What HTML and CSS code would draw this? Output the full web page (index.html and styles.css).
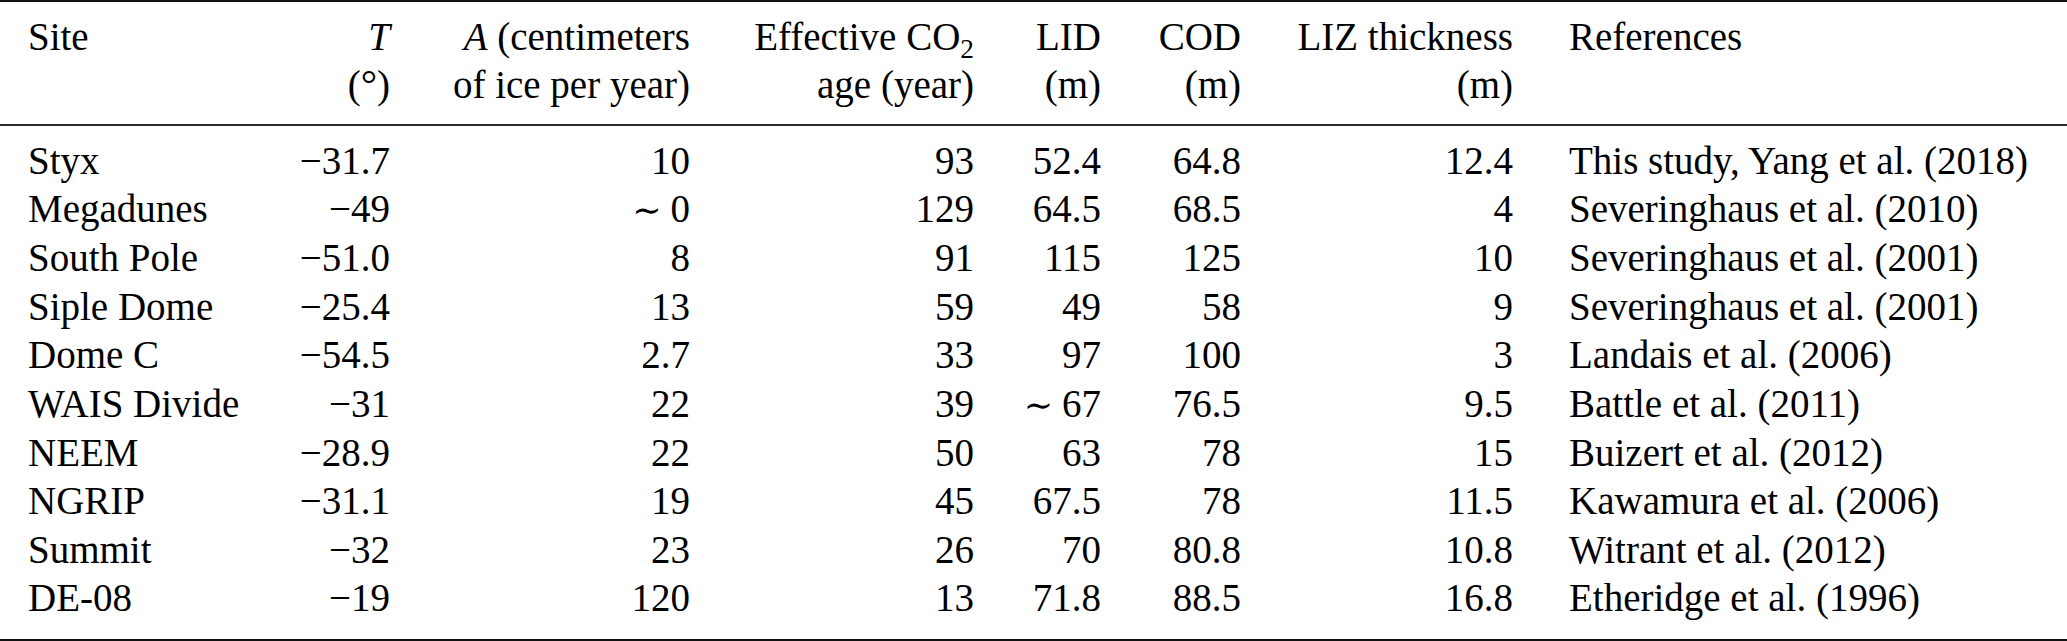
FILE: index.html
```html
<!DOCTYPE html>
<html lang="en">
<head>
<meta charset="utf-8">
<title>Firn properties at ice core sites</title>
<link rel="stylesheet" href="styles.css">
</head>
<body>
<table class="data">
  <colgroup>
    <col class="c-site">
    <col class="c-t">
    <col class="c-a">
    <col class="c-co2">
    <col class="c-lid">
    <col class="c-cod">
    <col class="c-liz">
    <col class="c-ref">
  </colgroup>
  <thead>
    <tr>
      <th class="left first">Site</th>
      <th><i>T</i><br>(<span class="deg">°</span>)</th>
      <th><i>A</i> (centimeters<br>of ice per year)</th>
      <th>Effective CO<sub>2</sub><br>age (year)</th>
      <th>LID<br>(m)</th>
      <th>COD<br>(m)</th>
      <th>LIZ thickness<br>(m)</th>
      <th class="left ref">References</th>
    </tr>
  </thead>
  <tbody>
    <tr><td class="left first">Styx</td><td>−31.7</td><td>10</td><td>93</td><td>52.4</td><td>64.8</td><td>12.4</td><td class="left ref">This study, Yang et al. (2018)</td></tr>
    <tr><td class="left first">Megadunes</td><td>−49</td><td><span class="sim">∼</span>0</td><td>129</td><td>64.5</td><td>68.5</td><td>4</td><td class="left ref">Severinghaus et al. (2010)</td></tr>
    <tr><td class="left first">South Pole</td><td>−51.0</td><td>8</td><td>91</td><td>115</td><td>125</td><td>10</td><td class="left ref">Severinghaus et al. (2001)</td></tr>
    <tr><td class="left first">Siple Dome</td><td>−25.4</td><td>13</td><td>59</td><td>49</td><td>58</td><td>9</td><td class="left ref">Severinghaus et al. (2001)</td></tr>
    <tr><td class="left first">Dome C</td><td>−54.5</td><td>2.7</td><td>33</td><td>97</td><td>100</td><td>3</td><td class="left ref">Landais et al. (2006)</td></tr>
    <tr><td class="left first">WAIS Divide</td><td>−31</td><td>22</td><td>39</td><td><span class="sim">∼</span>67</td><td>76.5</td><td>9.5</td><td class="left ref">Battle et al. (2011)</td></tr>
    <tr><td class="left first">NEEM</td><td>−28.9</td><td>22</td><td>50</td><td>63</td><td>78</td><td>15</td><td class="left ref">Buizert et al. (2012)</td></tr>
    <tr><td class="left first">NGRIP</td><td>−31.1</td><td>19</td><td>45</td><td>67.5</td><td>78</td><td>11.5</td><td class="left ref">Kawamura et al. (2006)</td></tr>
    <tr><td class="left first">Summit</td><td>−32</td><td>23</td><td>26</td><td>70</td><td>80.8</td><td>10.8</td><td class="left ref">Witrant et al. (2012)</td></tr>
    <tr><td class="left first">DE-08</td><td>−19</td><td>120</td><td>13</td><td>71.8</td><td>88.5</td><td>16.8</td><td class="left ref">Etheridge et al. (1996)</td></tr>
  </tbody>
</table>
</body>
</html>
```

FILE: styles.css
```css
html, body {
  margin: 0;
  padding: 0;
  background: #ffffff;
}

.data {
  width: 2067px;
  table-layout: fixed;
  border-collapse: separate;
  border-spacing: 0;
  border-top: 2px solid #111;
  border-bottom: 2px solid #111;
  font-family: "Liberation Serif", "DejaVu Serif", serif;
  font-size: 39px;
  line-height: 48.4px;
  color: #000;
}

.c-site { width: 290px; }
.c-t    { width: 100px; }
.c-a    { width: 300px; }
.c-co2  { width: 284px; }
.c-lid  { width: 127px; }
.c-cod  { width: 140px; }
.c-liz  { width: 272px; }
.c-ref  { width: 554px; }

.data th,
.data td {
  padding: 0;
  text-align: right;
  vertical-align: top;
  white-space: nowrap;
  font-weight: normal;
}

.data th {
  padding-top: 10.6px;
  padding-bottom: 14.5px;
  border-bottom: 2px solid #2a2a2a;
}

.data tbody tr:first-child td {
  padding-top: 10.6px;
}

.data tbody tr:last-child td {
  padding-bottom: 16.4px;
}

.data .left {
  text-align: left;
}

.data .first {
  padding-left: 28px;
}

.data .ref {
  padding-left: 56px;
}

.data sub {
  font-size: 0.7em;
  line-height: 0;
  vertical-align: -0.28em;
}

.deg {
  font-size: 1.05em;
}

.sim {
  font-family: "DejaVu Serif", serif;
  font-size: 0.9em;
  margin-right: 0.25em;
}
```
